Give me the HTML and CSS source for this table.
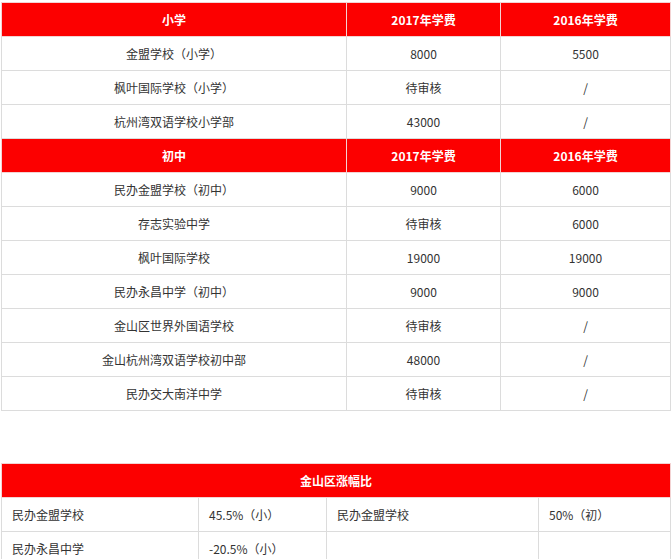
FILE: index.html
```html
<!DOCTYPE html>
<html lang="zh">
<head>
<meta charset="utf-8">
<link rel="stylesheet" href="styles.css">
</head>
<body>
<div class="page">
<table class="fees">
  <colgroup><col class="c1"><col class="c2"><col class="c3"></colgroup>
  <tr class="head"><th>小学</th><th>2017年学费</th><th>2016年学费</th></tr>
  <tr><td>金盟学校（小学）</td><td>8000</td><td>5500</td></tr>
  <tr><td>枫叶国际学校（小学）</td><td>待审核</td><td>/</td></tr>
  <tr><td>杭州湾双语学校小学部</td><td>43000</td><td>/</td></tr>
  <tr class="head"><th>初中</th><th>2017年学费</th><th>2016年学费</th></tr>
  <tr><td>民办金盟学校（初中）</td><td>9000</td><td>6000</td></tr>
  <tr><td>存志实验中学</td><td>待审核</td><td>6000</td></tr>
  <tr><td>枫叶国际学校</td><td>19000</td><td>19000</td></tr>
  <tr><td>民办永昌中学（初中）</td><td>9000</td><td>9000</td></tr>
  <tr><td>金山区世界外国语学校</td><td>待审核</td><td>/</td></tr>
  <tr><td>金山杭州湾双语学校初中部</td><td>48000</td><td>/</td></tr>
  <tr><td>民办交大南洋中学</td><td>待审核</td><td>/</td></tr>
</table>

<table class="rise">
  <colgroup><col class="r1"><col class="r2"><col class="r3"><col class="r4"></colgroup>
  <tr class="head"><th colspan="4">金山区涨幅比</th></tr>
  <tr><td>民办金盟学校</td><td>45.5%（小）</td><td>民办金盟学校</td><td>50%（初）</td></tr>
  <tr><td>民办永昌中学</td><td>-20.5%（小）</td><td></td><td></td></tr>
</table>
</div>
</body>
</html>
```

FILE: styles.css
```css
html, body {
  margin: 0;
  padding: 0;
  background: #fff;
}

.page {
  padding: 2px 2px 0 1px;
  font-family: "Noto Sans CJK SC", "Noto Sans", sans-serif;
  font-size: 12px;
  color: #333;
}

table {
  border-collapse: collapse;
  table-layout: fixed;
  width: 669px;
}

td, th {
  border: 1px solid #dcdcdc;
  height: 33px;
  padding: 0;
  line-height: 16px;
  font-weight: normal;
}

.fees td, .fees th {
  text-align: center;
}

.head th {
  background: #fc0000;
  color: #fff;
  font-weight: bold;
  text-align: center;
  border-color: #f3d3d3;
}

.c1 { width: 345px; }
.c2 { width: 154px; }
.c3 { width: 170px; }

.rise {
  margin-top: 52px;
}

.rise td {
  text-align: left;
  padding-left: 10px;
}

.r1 { width: 197px; }
.r2 { width: 128px; }
.r3 { width: 212px; }
.r4 { width: 132px; }
```
